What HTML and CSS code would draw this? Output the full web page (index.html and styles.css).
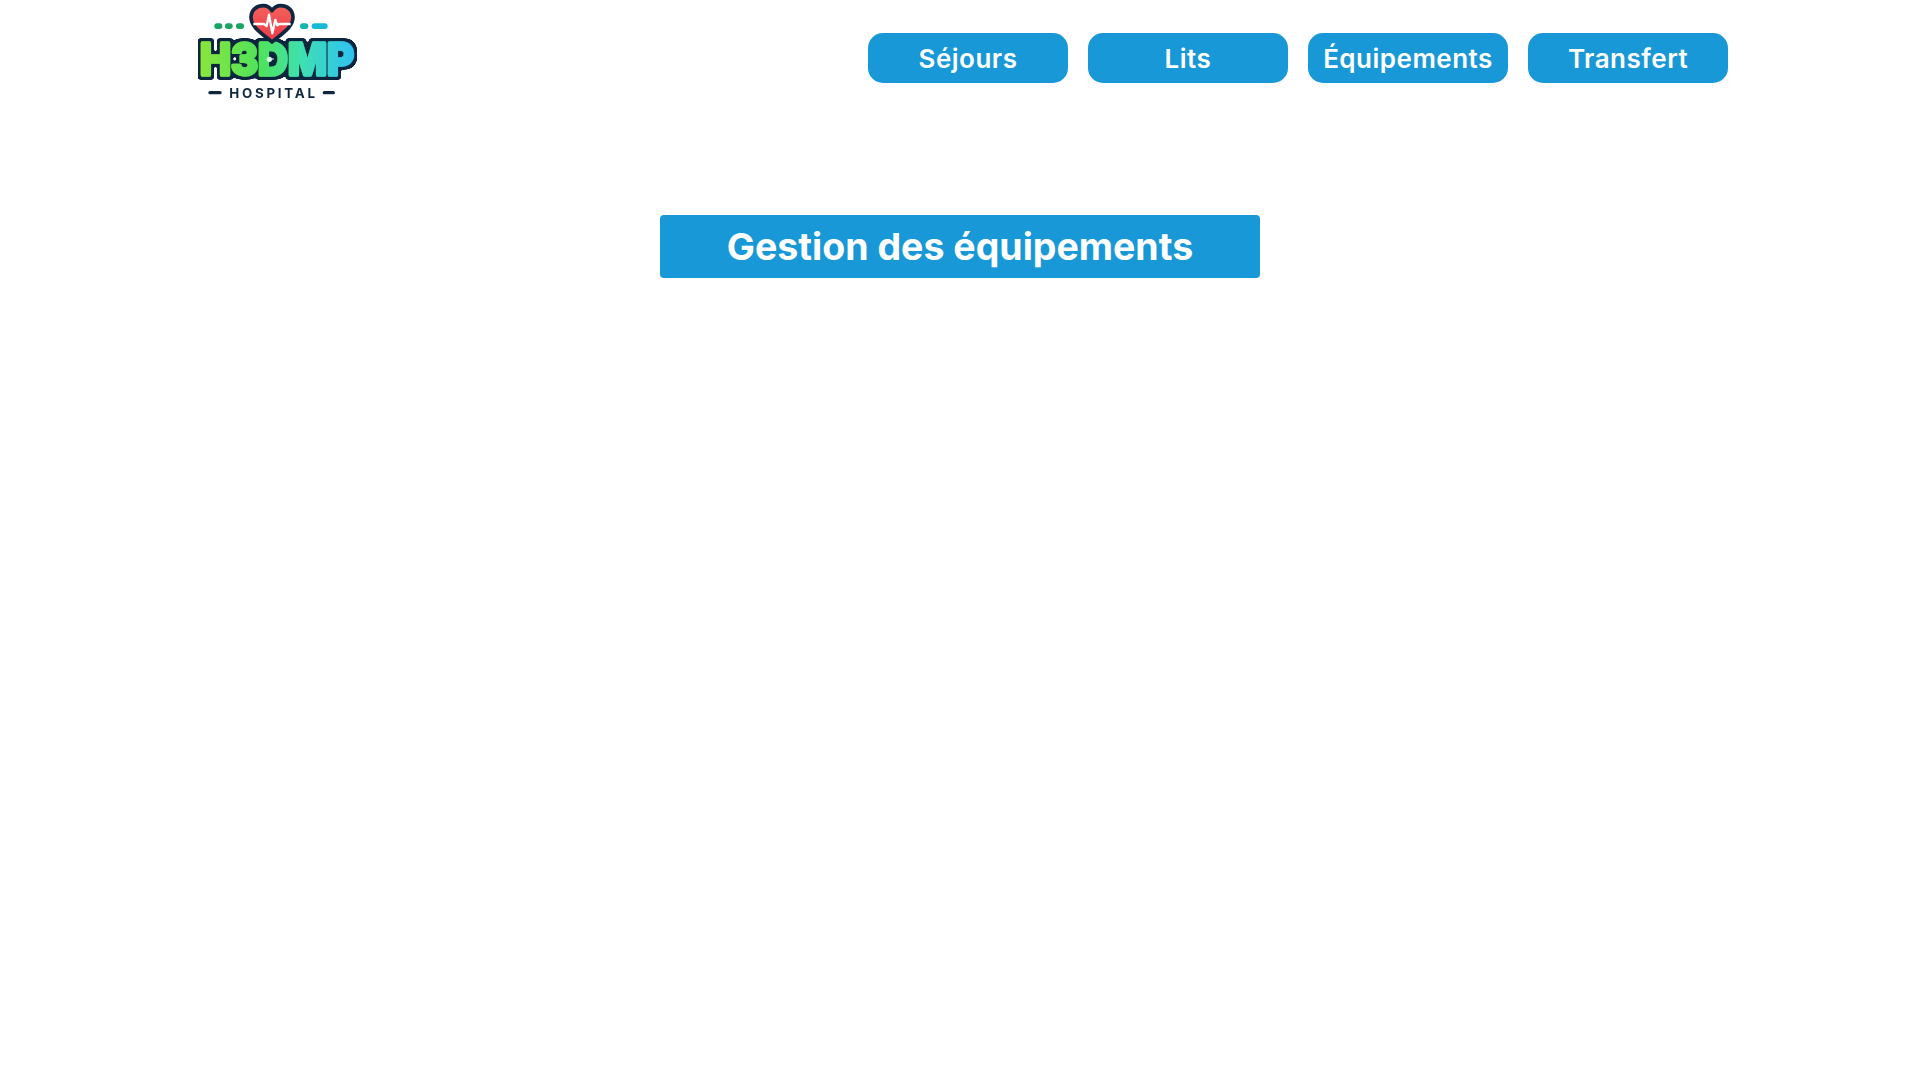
FILE: index.html
```html
<!DOCTYPE html>
<html lang="fr">
<head>
<meta charset="utf-8">
<title>Gestion des équipements</title>
<link rel="stylesheet" href="styles.css">
</head>
<body>
<header class="header">
  <svg class="logo" viewBox="0 0 600 330" role="img" aria-label="H3DMP Hospital">
    <defs>
      <linearGradient id="lg" x1="50" x2="530" y1="0" y2="0" gradientUnits="userSpaceOnUse">
        <stop offset="0" stop-color="#8ce63a"/>
        <stop offset=".4" stop-color="#4ee35c"/>
        <stop offset=".65" stop-color="#3fe0b0"/>
        <stop offset="1" stop-color="#2dc0f5"/>
      </linearGradient>
      <linearGradient id="hg" x1="0" x2="0" y1="20" y2="120" gradientUnits="userSpaceOnUse">
        <stop offset="0" stop-color="#f4605a"/>
        <stop offset="1" stop-color="#ee3b4a"/>
      </linearGradient>
      <filter id="outline" x="-10%" y="-20%" width="120%" height="140%">
        <feMorphology in="SourceAlpha" operator="dilate" radius="9" result="fat"/>
        <feGaussianBlur in="fat" stdDeviation="3" result="soft"/>
        <feComponentTransfer in="soft" result="hard">
          <feFuncA type="linear" slope="6" intercept="-2.5"/>
        </feComponentTransfer>
        <feFlood flood-color="#10263f"/>
        <feComposite in2="hard" operator="in" result="edge"/>
        <feMerge>
          <feMergeNode in="edge"/>
          <feMergeNode in="SourceGraphic"/>
        </feMerge>
      </filter>
    </defs>
    <rect class="dot-g" x="103" y="70" width="24" height="17" rx="8"/>
    <rect class="dot-g" x="135" y="70" width="23" height="17" rx="8"/>
    <rect class="dot-g" x="168" y="70" width="24" height="17" rx="8"/>
    <rect class="dot-t" x="360" y="70" width="25" height="17" rx="8"/>
    <rect class="dot-c" x="395" y="70" width="48" height="17" rx="8"/>
    <text class="brand" x="60" y="226" textLength="462" lengthAdjust="spacingAndGlyphs" fill="url(#lg)" stroke="url(#lg)" filter="url(#outline)">H3DMP</text>
    <circle class="spark" cx="268" cy="178" r="8"/>
    <path class="heart" fill="url(#hg)" d="M276 126C252 104 213 84 213 52C213 28 232 17 250 17C261 17 270 23 276 32C282 23 291 17 302 17C320 17 339 28 339 52C339 84 300 104 276 126Z"/>
    <path class="band" d="M220 72H252L260 78L267 44L277 100L286 60L292 76L298 72H332"/>
    <rect class="dash" x="85" y="273" width="40" height="10" rx="5"/>
    <rect class="dash" x="428" y="273" width="37" height="10" rx="5"/>
    <text class="sub" x="148" y="294" textLength="257" lengthAdjust="spacing">HOSPITAL</text>
  </svg>
  <nav class="nav">
    <a class="nav-btn" href="#">Séjours</a>
    <a class="nav-btn" href="#">Lits</a>
    <a class="nav-btn" href="#">Équipements</a>
    <a class="nav-btn" href="#">Transfert</a>
  </nav>
</header>
<main class="main">
  <h1 class="title">Gestion des équipements</h1>
</main>
</body>
</html>
```
FILE: styles.css
```css
* { box-sizing: border-box; }
html, body { height: 100%; }
body {
  margin: 0;
  background: #fff;
  font-family: Inter, "Open Sans", "Liberation Sans", sans-serif;
  overflow: hidden;
}
.header {
  display: flex;
  align-items: flex-start;
  justify-content: space-between;
  padding: 0 192px 0 180px;
  height: 110px;
}
.logo { display: block; width: 200px; height: 110px; flex: none; filter: blur(0.35px); }
.nav { display: flex; gap: 20px; padding-top: 33px; }
.nav-btn {
  display: flex;
  align-items: center;
  justify-content: center;
  width: 200px;
  height: 50px;
  border-radius: 15px;
  background: #1998d8;
  color: #fff;
  font-size: 26px;
  font-weight: 600;
  letter-spacing: 0.5px;
  text-decoration: none;
}
.main { display: flex; justify-content: center; padding-top: 105px; }
.title {
  display: flex;
  align-items: center;
  justify-content: center;
  width: 600px;
  height: 63px;
  margin: 0;
  border-radius: 4px;
  background: #1998d8;
  color: #fff;
  font-size: 37.5px;
  font-weight: 700;
}
.dot-g { fill: #19a463; }
.dot-t { fill: #14b5ae; }
.dot-c { fill: #17b9d6; }
.heart { stroke: #10263f; stroke-width: 11; stroke-linejoin: round; }
.band { fill: none; stroke: #fff; stroke-width: 7; stroke-linejoin: round; }
.brand {
  font-family: Inter, sans-serif;
  font-size: 132px;
  font-weight: 800;
  stroke-width: 10;
  stroke-linejoin: round;
}
.spark { fill: #d9fbe0; }
.dash { fill: #10263f; }
.sub {
  font-family: Inter, sans-serif;
  font-size: 40px;
  font-weight: 700;
  fill: #10263f;
}
```
